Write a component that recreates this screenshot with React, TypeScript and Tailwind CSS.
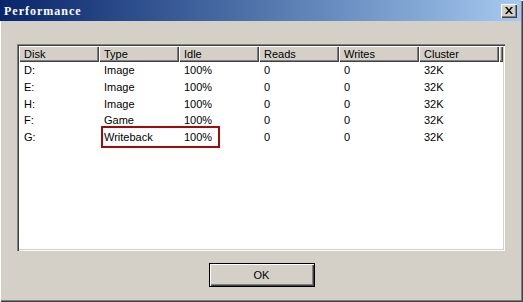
import React from 'react'

const columns = [
  { label: 'Disk', width: 'w-[80px]' },
  { label: 'Type', width: 'w-[80px]' },
  { label: 'Idle', width: 'w-[80px]' },
  { label: 'Reads', width: 'w-[80px]' },
  { label: 'Writes', width: 'w-[80px]' },
  { label: 'Cluster', width: 'w-[80px]' },
]

const rows = [
  ['D:', 'Image', '100%', '0', '0', '32K'],
  ['E:', 'Image', '100%', '0', '0', '32K'],
  ['H:', 'Image', '100%', '0', '0', '32K'],
  ['F:', 'Game', '100%', '0', '0', '32K'],
  ['G:', 'Writeback', '100%', '0', '0', '32K'],
]

export default function App() {
  return (
    <div
      className="w-[523px] h-[302px] bg-[#d4d0c8] flex flex-col shadow-[inset_1px_1px_#ffffff,inset_-1px_-1px_#404040,inset_-2px_-2px_#808080] text-[11px] text-black"
      style={{ fontFamily: '"Liberation Sans", Arial, sans-serif' }}
    >
      {/* Title bar */}
      <div className="h-[21px] mr-[2px] flex items-center justify-between bg-gradient-to-r from-[#0a246a] to-[#a6caf0] pl-[4px] pr-[4px]">
        <span
          className="text-white font-bold text-[12px] tracking-[1px]"
          style={{ fontFamily: '"Liberation Serif", "Times New Roman", serif' }}
        >
          Performance
        </span>
        <button className="w-[16px] h-[14px] bg-[#d4d0c8] flex items-center justify-center shadow-[inset_1px_1px_#ffffff,inset_-1px_-1px_#404040,inset_-2px_-2px_#808080]">
          <svg width="8" height="7" viewBox="0 0 8 7">
            <path d="M0 0h2l2 2.5L6 0h2L5 3.5 8 7H6L4 4.5 2 7H0l3-3.5z" fill="#000" />
          </svg>
        </button>
      </div>

      {/* Body */}
      <div className="flex-1 flex flex-col items-center pt-[23px]">
        {/* List view */}
        <div className="relative w-[488px] h-[207px] bg-white self-start ml-[17px] shadow-[inset_1px_1px_#808080,inset_2px_2px_#404040,inset_-1px_-1px_#ffffff,inset_-2px_-2px_#d4d0c8] p-[2px]">
          <div className="flex h-[16px]">
            {columns.map((c) => (
              <div
                key={c.label}
                className={`${c.width} h-full bg-[#d4d0c8] pl-[5px] flex items-center shadow-[inset_1px_1px_#ffffff,inset_-1px_-1px_#404040,inset_-2px_-2px_#808080]`}
              >
                {c.label}
              </div>
            ))}
            <div className="flex-1 h-full bg-[#d4d0c8] shadow-[inset_1px_1px_#ffffff,inset_-1px_-1px_#404040,inset_-2px_-2px_#808080]" />
          </div>
          <div className="flex flex-col">
            {rows.map((r, i) => (
              <div key={i} className="flex h-[16.75px] items-center">
                {r.map((cell, j) => (
                  <div key={j} className="w-[80px] pl-[5px]">
                    {cell}
                  </div>
                ))}
              </div>
            ))}
          </div>
          {/* Highlight */}
          <div className="absolute left-[84px] top-[82px] w-[119px] h-[22px] border-2 border-[#a00c0c]" />
        </div>

        {/* OK button */}
        <button className="mt-[12px] w-[106px] h-[24px] bg-[#d4d0c8] border border-black shadow-[inset_1px_1px_#ffffff,inset_-1px_-1px_#404040,inset_-2px_-2px_#808080] flex items-center justify-center">
          OK
        </button>
      </div>
    </div>
  )
}
